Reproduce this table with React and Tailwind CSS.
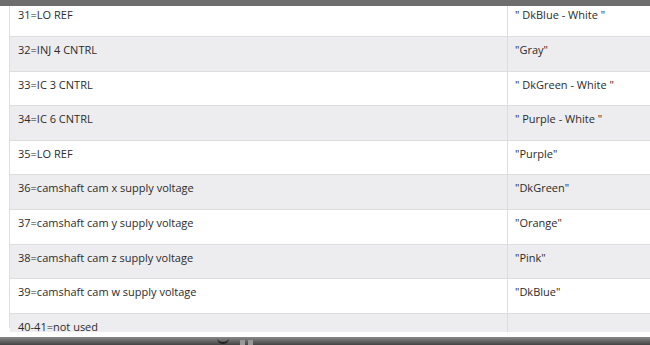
import React from "react";

const rows = [
  ["31=LO REF", "\" DkBlue - White \""],
  ["32=INJ 4 CNTRL", "\"Gray\""],
  ["33=IC 3 CNTRL", "\" DkGreen - White \""],
  ["34=IC 6 CNTRL", "\" Purple - White \""],
  ["35=LO REF", "\"Purple\""],
  ["36=camshaft cam x supply voltage", "\"DkGreen\""],
  ["37=camshaft cam y supply voltage", "\"Orange\""],
  ["38=camshaft cam z supply voltage", "\"Pink\""],
  ["39=camshaft cam w supply voltage", "\"DkBlue\""],
  ["40-41=not used", ""],
];

export default function App() {
  return (
    <div className="w-[650px] h-[345px] overflow-hidden bg-white flex flex-col" style={{ fontFamily: '"Open Sans", "Noto Sans", sans-serif' }}>
      <div className="h-[6px] shrink-0 bg-[#6d6d6d] relative z-10" />
      <div className="flex-1 overflow-hidden pl-[9px]">
        <div className="border-l border-[#dedede] h-full">
          <div className="mt-[-3.6px]">
            {rows.map((r, i) => (
              <div
                key={i}
                className={`flex h-[34.6px] border-b border-[#dddddd] text-[11px] leading-[15px] text-[#2b2b2b] ${i % 2 ? "bg-[#ededef]" : "bg-white"}`}
              >
                <div className="w-[498px] shrink-0 border-r border-[#dddddd] pl-[8px] pt-[5px]">{r[0]}</div>
                <div className="flex-1 pl-[7px] pt-[5px] whitespace-pre">{r[1]}</div>
              </div>
            ))}
          </div>
        </div>
      </div>
      <div className="h-[5px] shrink-0 bg-white" />
      <div className="h-[8px] shrink-0 bg-gradient-to-b from-[#8a8a8a] to-[#444] relative">
        <div className="absolute left-[217px] top-[1px] w-[12px] h-[6px] border-b-2 border-[#222] rounded-b-full" />
        <div className="absolute left-[240px] top-[3px] w-[5px] h-[5px] bg-[#999]" />
        <div className="absolute left-[248px] top-[3px] w-[5px] h-[5px] bg-[#999]" />
      </div>
    </div>
  );
}
